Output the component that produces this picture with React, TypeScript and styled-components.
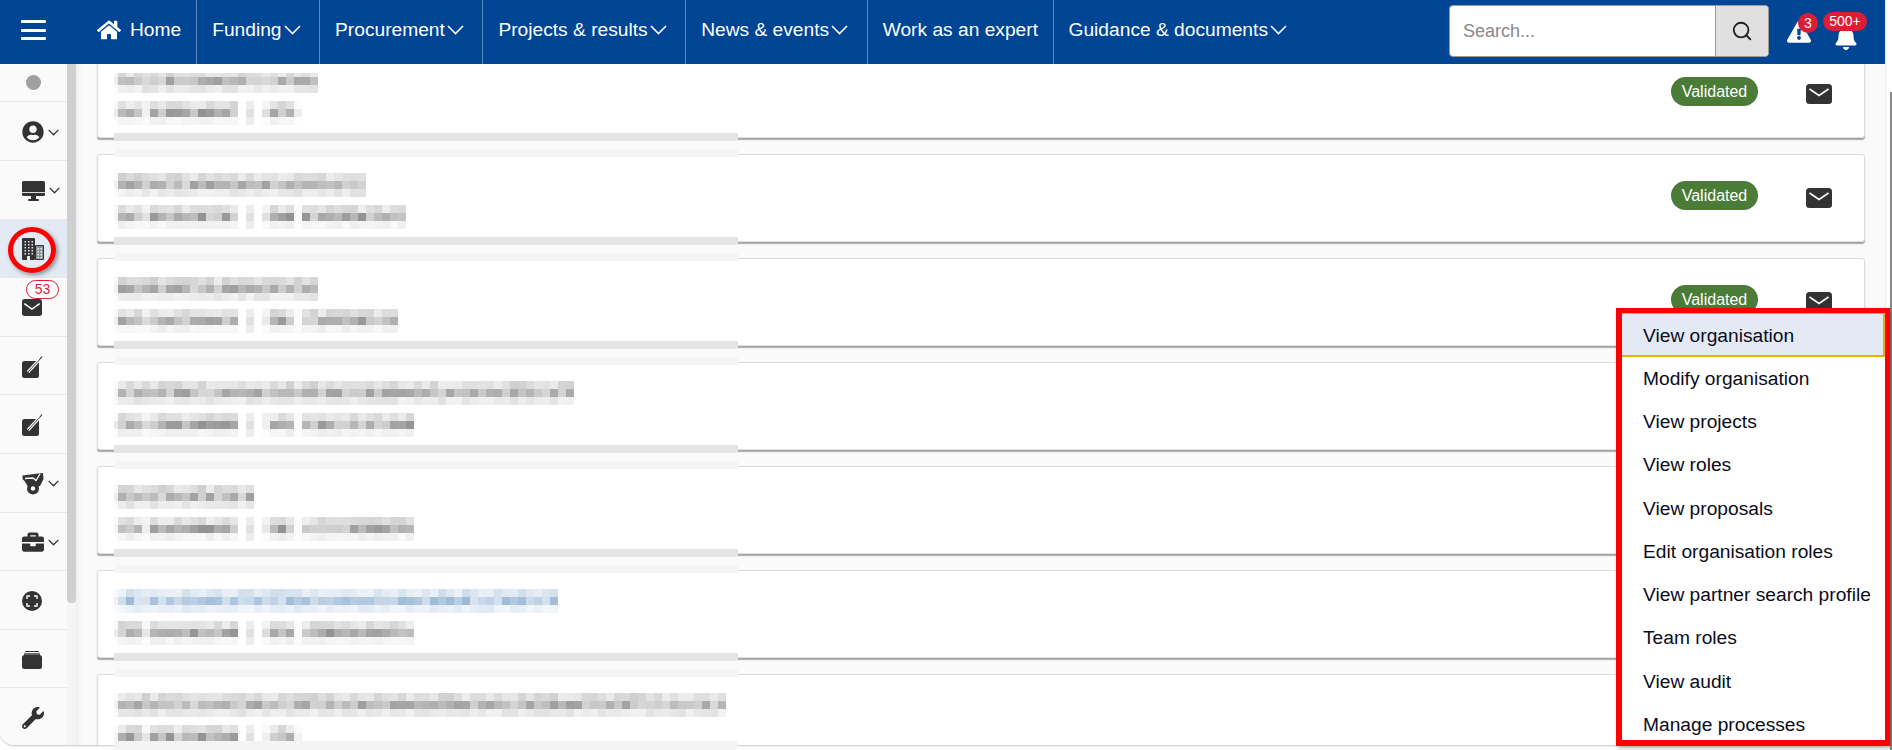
import React from "react";
import styled, { createGlobalStyle } from "styled-components";
import {
  FaBell,
  FaBriefcase,
  FaExclamationTriangle,
  FaHome,
  FaUserCircle,
  FaWrench,
} from "react-icons/fa";
import { FiSearch } from "react-icons/fi";

const GlobalStyle = createGlobalStyle`
  html, body {
    margin: 0;
    padding: 0;
    height: 750px;
    overflow: hidden;
    background: #fff;
    font-family: "Liberation Sans", Arial, sans-serif;
  }
`;

const Page = styled.div`
  position: relative;
  width: 1892px;
  height: 750px;
  overflow: hidden;
`;

const Shell = styled.div`
  width: 1885px;
  height: 745px;
  display: flex;
  flex-direction: column;
  background: #fafafa;
  border-bottom-left-radius: 14px;
  box-shadow: 0 1px 2px #c4c4c4;
  overflow: hidden;
`;

const Header = styled.header`
  position: relative;
  z-index: 5;
  flex: 0 0 64px;
  display: flex;
  align-items: stretch;
  background: #004494;
  color: #fff;
`;

const Burger = styled.div`
  width: 25px;
  margin: 20px 51px 0 21px;
  height: 20px;
  display: flex;
  flex-direction: column;
  justify-content: space-between;

  span {
    height: 3px;
    border-radius: 1px;
    background: #fff;
  }
`;

const NavItem = styled.div<{ $first?: boolean }>`
  display: flex;
  align-items: center;
  gap: 2px;
  padding: 0 14.5px 4px 15px;
  font-size: 19.2px;
  white-space: nowrap;
  border-left: ${(p) => (p.$first ? "none" : "1px solid #5f86bb")};
`;

const HomeItem = styled(NavItem)`
  gap: 9px;
  padding: 0 15px 4px 0;
  svg {
    font-size: 24px;
  }
`;

const Chevron = styled.svg<{ $size?: number }>`
  width: ${(p) => p.$size ?? 17}px;
  height: ${(p) => Math.round((p.$size ?? 17) * 0.6)}px;
  fill: none;
  stroke: currentColor;
  stroke-width: 1.6;
`;

const NavCaret = styled(Chevron)`
  margin-right: 4px;
`;

const Spacer = styled.div`
  flex: 1;
`;

const Search = styled.div`
  align-self: flex-start;
  margin-top: 5px;
  width: 320px;
  height: 52px;
  box-sizing: border-box;
  display: flex;
  border: 1px solid #9a9a9a;
  border-radius: 4px;
  overflow: hidden;
  background: #fff;
`;

const SearchText = styled.div`
  flex: 1;
  padding-left: 13px;
  display: flex;
  align-items: center;
  font-size: 18px;
  color: #8a8a8a;
`;

const SearchButton = styled.div`
  width: 52px;
  display: flex;
  align-items: center;
  justify-content: center;
  background: #e0e0e0;
  border-left: 1px solid #9a9a9a;
  color: #222;
  font-size: 22px;
`;

const Alerts = styled.div`
  width: 116px;
  display: flex;
`;

const AlertIcon = styled.div`
  position: relative;
  margin: 20px 0 0 18px;
  height: 24px;
  font-size: 24px;
  line-height: 0;
`;

const BellIcon = styled(AlertIcon)`
  margin: 26px 0 0 23px;
`;

const RoundBadge = styled.span`
  position: absolute;
  left: 11px;
  top: -7px;
  width: 20px;
  height: 20px;
  border-radius: 50%;
  background: #dc1e35;
  color: #fff;
  font-size: 14px;
  line-height: 20px;
  text-align: center;
`;

const PillBadge = styled.span`
  position: absolute;
  left: -11px;
  top: -14px;
  width: 44px;
  height: 19px;
  border-radius: 10px;
  background: #dc1e35;
  color: #fff;
  font-size: 14px;
  line-height: 19px;
  text-align: center;
`;

const Body = styled.div`
  flex: 1;
  min-height: 0;
  display: flex;
`;

const Sidebar = styled.aside`
  flex: 0 0 67px;
  display: flex;
  flex-direction: column;
  background: #fafafa;
`;

const SideItem = styled.div<{ $active?: boolean; $short?: boolean }>`
  position: relative;
  flex: 0 0 ${(p) => (p.$short ? 37.4 : 57.6)}px;
  display: flex;
  align-items: center;
  padding-left: 22px;
  gap: 4px;
  border-bottom: 1px solid #e6e6e6;
  background: ${(p) => (p.$active ? "#e3eaf3" : "transparent")};
  color: #333;
  font-size: 22px;

  > svg {
    margin-top: 2px;
  }

  &:last-child {
    border-bottom: none;
  }
`;

const Dot = styled.span`
  width: 15px;
  height: 15px;
  margin-left: 4px;
  border-radius: 50%;
  background: #a0a0a0;
`;

const RedCircle = styled.span`
  position: absolute;
  left: 8px;
  top: 7px;
  width: 48px;
  height: 46px;
  box-sizing: border-box;
  border: 5px solid #f00;
  border-radius: 50%;
  box-shadow: 2px 2px 4px rgba(0, 0, 0, 0.4);
`;

const CountBadge = styled.span`
  position: absolute;
  left: 26px;
  top: 2px;
  width: 33px;
  height: 19px;
  box-sizing: border-box;
  border: 1px solid #dc1e35;
  border-radius: 10px;
  background: #fff;
  color: #dc1e35;
  font-size: 14px;
  line-height: 17px;
  text-align: center;
`;

const ScrollTrack = styled.div`
  flex: 0 0 9px;
  background: #f5f5f5;
`;

const ScrollThumb = styled.div`
  height: 539px;
  border-radius: 0 0 4px 4px;
  background: #d0d0d0;
`;

const Content = styled.main`
  flex: 1;
  min-width: 0;
  overflow: hidden;
  padding: 0 20px 0 21px;
  box-shadow: inset 8px 0 8px -8px #e4e4e8;
`;

const CardList = styled.div`
  display: flex;
  flex-direction: column;
  gap: 16px;
  margin-top: -14px;
`;

const Card = styled.section`
  flex: 0 0 88px;
  box-sizing: border-box;
  height: 88px;
  display: flex;
  justify-content: space-between;
  padding: 18px 32px 0 16px;
  background: #fff;
  border: 1px solid #dcdcdc;
  border-radius: 3px;
  box-shadow: 0 2px 1px #a8a8a8;
`;

const Smear = styled.div`
  position: relative;
  z-index: 1;
  width: 624px;
  display: flex;
  flex-direction: column;
  gap: 8px;
`;

const MosaicBlock = styled.div<{ $cropTop?: boolean }>`
  display: flex;
  flex-direction: column;

  > div:first-child {
    height: ${(p) => (p.$cropTop ? 4 : 8)}px;
    margin-top: ${(p) => (p.$cropTop ? 4 : 0)}px;
  }
`;

const MosaicRow = styled.div`
  display: flex;
  height: 8px;
`;

const MosaicCell = styled.span`
  flex: 0 0 8px;
  height: 100%;

  &:first-child {
    flex-basis: 4px;
  }
`;

const Band = styled.div<{ $tone: string }>`
  height: 8px;
  background: ${(p) => p.$tone};
`;

const Status = styled.div`
  display: flex;
  align-items: flex-start;
  gap: 48px;
`;

const Pill = styled.span`
  margin-top: 8px;
  width: 87px;
  height: 29px;
  border-radius: 15px;
  background: #4a7c38;
  color: #fff;
  font-size: 16px;
  line-height: 29px;
  text-align: center;
`;

const MailIcon = styled.svg`
  width: 26px;
  height: 20px;
  margin-top: 15px;
`;

const Menu = styled.div`
  position: absolute;
  left: 1616px;
  top: 308px;
  width: 274px;
  height: 438px;
  box-sizing: border-box;
  border: 6px solid #f00;
  border-top-width: 5px;
  border-right-width: 5px;
  background: #fff;
  box-shadow: 2px 2px 4px rgba(0, 0, 0, 0.3);
  display: flex;
  flex-direction: column;
  overflow: hidden;
  z-index: 8;
`;

const MenuItem = styled.div<{ $active?: boolean }>`
  flex: 0 0 43.3px;
  box-sizing: border-box;
  display: flex;
  align-items: center;
  padding-left: 21px;
  font-size: 19.2px;
  color: #0b0b1c;
  white-space: nowrap;
  ${(p) =>
    p.$active &&
    `
    background: #e3eaf3;
    box-shadow: inset -2px -2px 0 #e6b400, inset 0 1px 0 #e6b400;
    flex-basis: 44px;
    padding-top: 2px;
  `}
`;

const BottomStrip = styled.div`
  position: absolute;
  left: 114px;
  top: 741px;
  width: 624px;
  height: 9px;
  background: #f4f4f4;
  z-index: 3;
`;

const DarkScroll = styled.div`
  position: absolute;
  right: 0;
  top: 92px;
  bottom: 0;
  width: 2px;
  background: #8a8a8a;
`;

const ChevronPath = () => <polyline points="1,1 8.5,8.5 16,1" />;

const NavChevron = () => (
  <NavCaret viewBox="0 0 17 10">
    <ChevronPath />
  </NavCaret>
);

const SideChevron = () => (
  <Chevron $size={11} viewBox="0 0 17 10" style={{ strokeWidth: 2 }}>
    <ChevronPath />
  </Chevron>
);

const Mail = () => (
  <MailIcon viewBox="0 0 26 20">
    <rect width="26" height="20" rx="3.5" fill="#333" />
    <polyline points="3.5,5 13,11.5 22.5,5" fill="none" stroke="#fff" strokeWidth="1.6" />
  </MailIcon>
);

const SideMail = () => (
  <svg width="20" height="17" viewBox="0 0 26 22">
    <rect width="26" height="22" rx="3.5" fill="#333" />
    <polyline points="3,6 13,13 23,6" fill="none" stroke="#fff" strokeWidth="2" />
  </svg>
);

const Screen = () => (
  <svg width="23" height="20" viewBox="0 0 23 20">
    <rect x="0" y="0" width="23" height="15" rx="1.5" fill="#333" />
    <rect x="0" y="11" width="23" height="1" fill="#ddd" />
    <rect x="9" y="15" width="5" height="3" fill="#333" />
    <rect x="6" y="18" width="11" height="2" rx="1" fill="#333" />
  </svg>
);

const EditBox = () => (
  <svg width="21" height="22" viewBox="0 0 21 22">
    <rect x="0" y="5" width="17" height="17" rx="2.5" fill="#333" />
    <line x1="6" y1="16" x2="18" y2="3" stroke="#fff" strokeWidth="3.2" />
    <line x1="6" y1="16" x2="18.5" y2="2.5" stroke="#333" strokeWidth="0.9" />
    <line x1="18" y1="3" x2="20" y2="0.5" stroke="#333" strokeWidth="1.2" />
  </svg>
);

const CartBadge = () => (
  <svg width="22" height="22" viewBox="0 0 22 22">
    <path d="M0.5 2.5 L12 1 L21 0 L21.5 6 L18 13 L7 15 L2.5 8 L0.5 6 Z" fill="#333" />
    <polyline points="3,5.5 11,5 14,7.5 18,1" fill="none" stroke="#fff" strokeWidth="1.3" />
    <circle cx="11" cy="15.5" r="6" fill="#333" />
    <circle cx="11" cy="15.5" r="2.2" fill="#fff" />
  </svg>
);

const Target = () => (
  <svg width="20" height="20" viewBox="0 0 20 20">
    <circle cx="10" cy="10" r="10" fill="#333" />
    <path d="M5 8 V5 H8 M12 5 H15 V8 M15 12 V15 H12 M8 15 H5 V12" fill="none" stroke="#fff" strokeWidth="1.4" />
  </svg>
);

const Archive = () => (
  <svg width="20" height="18" viewBox="0 0 20 18">
    <rect x="3" y="0" width="14" height="1" fill="#333" />
    <rect x="2" y="2" width="16" height="3" fill="#6a6a6a" />
    <rect x="0" y="4" width="20" height="14" rx="2.5" fill="#333" />
  </svg>
);

const Tower = () => (
  <svg width="22" height="22" viewBox="0 0 22 22">
    <rect x="0" y="0" width="13" height="22" rx="1" fill="#333" />
    <rect x="13" y="7" width="9" height="15" rx="1" fill="#333" />
    <rect x="14" y="8" width="7" height="13" fill="#8d9097" />
    {[3, 6, 9, 12, 15].map((y) =>
      [2.5, 6, 9.5].map((x) => <rect key={`${x}-${y}`} x={x} y={y} width="1.5" height="1.5" fill="#e3eaf3" />),
    )}
    {[10, 13, 16, 19].map((y) =>
      [15.5, 18.5].map((x) => <rect key={`${x}-${y}`} x={x} y={y} width="1.5" height="1.5" fill="#e3eaf3" />),
    )}
    <rect x="5" y="18" width="3" height="4" fill="#e3eaf3" />
  </svg>
);

// pseudo random noise so that each smeared text keeps the same look on every run
const noise = (a: number, b: number, c: number) => {
  const v = Math.sin(a * 12.9898 + b * 78.233 + c * 37.719) * 43758.5453;
  return v - Math.floor(v);
};

const shade = (depth: number, blue?: boolean) => {
  const d = Math.max(0, Math.min(1, depth));
  return blue
    ? `rgb(${Math.round(255 - d * 150)}, ${Math.round(255 - d * 105)}, ${Math.round(255 - d * 60)})`
    : `rgb(${Math.round(255 - d * 150)}, ${Math.round(255 - d * 150)}, ${Math.round(255 - d * 150)})`;
};

const Mosaic: React.FC<{
  seed: number;
  cells: number;
  levels: number[];
  blue?: boolean;
  sub?: boolean;
  cropTop?: boolean;
}> = ({ seed, cells, levels, blue, sub, cropTop }) => (
  <MosaicBlock $cropTop={cropTop}>
    {levels.map((level, row) => (
      <MosaicRow key={row}>
        {Array.from({ length: cells }).map((_, col) => {
          let depth = level * (0.55 + 0.9 * noise(seed, row, col));
          if (col === 0) depth *= 0.2;
          if (sub) {
            // the blurred text is "name | value": a gap, a thin bar, a gap
            if (col === 16 || col === 18) depth = 0;
            if (col === 17) depth = row === 1 ? 0.2 : 0.12;
            if (col === 4 || col === 19) depth *= 0.35;
            if (col === 23) depth = cells > 24 ? 0.02 : depth * 0.2;
          }
          return <MosaicCell key={col} style={{ background: shade(depth, blue) }} />;
        })}
      </MosaicRow>
    ))}
  </MosaicBlock>
);

const rows = [
  { title: 26, sub: 24 },
  { title: 32, sub: 37 },
  { title: 26, sub: 36 },
  { title: 58, sub: 38 },
  { title: 18, sub: 38 },
  { title: 56, sub: 38, blue: true },
  { title: 77, sub: 24 },
];

const menuItems = [
  "View organisation",
  "Modify organisation",
  "View projects",
  "View roles",
  "View proposals",
  "Edit organisation roles",
  "View partner search profile",
  "Team roles",
  "View audit",
  "Manage processes",
];

const navItems = [
  { label: "Funding", caret: true },
  { label: "Procurement", caret: true },
  { label: "Projects & results", caret: true },
  { label: "News & events", caret: true },
  { label: "Work as an expert" },
  { label: "Guidance & documents", caret: true },
];

const App: React.FC = () => (
  <Page>
    <GlobalStyle />
    <Shell>
      <Header>
        <Burger>
          <span />
          <span />
          <span />
        </Burger>
        <HomeItem $first>
          <FaHome />
          Home
        </HomeItem>
        {navItems.map((item) => (
          <NavItem key={item.label}>
            {item.label}
            {item.caret && <NavChevron />}
          </NavItem>
        ))}
        <Spacer />
        <Search>
          <SearchText>Search...</SearchText>
          <SearchButton>
            <FiSearch />
          </SearchButton>
        </Search>
        <Alerts>
          <AlertIcon>
            <FaExclamationTriangle />
            <RoundBadge>3</RoundBadge>
          </AlertIcon>
          <BellIcon>
            <FaBell />
            <PillBadge>500+</PillBadge>
          </BellIcon>
        </Alerts>
      </Header>
      <Body>
        <Sidebar>
          <SideItem $short>
            <Dot />
          </SideItem>
          <SideItem>
            <FaUserCircle />
            <SideChevron />
          </SideItem>
          <SideItem>
            <Screen />
            <SideChevron />
          </SideItem>
          <SideItem $active>
            <RedCircle />
            <Tower />
          </SideItem>
          <SideItem>
            <CountBadge>53</CountBadge>
            <SideMail />
          </SideItem>
          <SideItem>
            <EditBox />
          </SideItem>
          <SideItem>
            <EditBox />
          </SideItem>
          <SideItem>
            <CartBadge />
            <SideChevron />
          </SideItem>
          <SideItem>
            <FaBriefcase />
            <SideChevron />
          </SideItem>
          <SideItem>
            <Target />
          </SideItem>
          <SideItem>
            <Archive />
          </SideItem>
          <SideItem>
            <FaWrench />
          </SideItem>
        </Sidebar>
        <ScrollTrack>
          <ScrollThumb />
        </ScrollTrack>
        <Content>
          <CardList>
            {rows.map((row, i) => (
              <Card key={i}>
                <Smear>
                  <Mosaic
                    seed={i + 1}
                    cells={row.title}
                    levels={[0.22, 0.45, 0.14]}
                    blue={row.blue}
                    cropTop={i === 0}
                  />
                  <Mosaic seed={i + 21} cells={row.sub} levels={[0.2, 0.5, 0.08]} sub />
                  <div>
                    <Band $tone="#e4e4e4" />
                    <Band $tone="#fafafa" />
                    <Band $tone="#f5f5f5" />
                  </div>
                </Smear>
                {i < 3 && (
                  <Status>
                    <Pill>Validated</Pill>
                    <Mail />
                  </Status>
                )}
              </Card>
            ))}
          </CardList>
        </Content>
      </Body>
    </Shell>
    <BottomStrip />
    <Menu>
      {menuItems.map((label, i) => (
        <MenuItem key={label} $active={i === 0}>
          {label}
        </MenuItem>
      ))}
    </Menu>
    <DarkScroll />
  </Page>
);

export default App;
